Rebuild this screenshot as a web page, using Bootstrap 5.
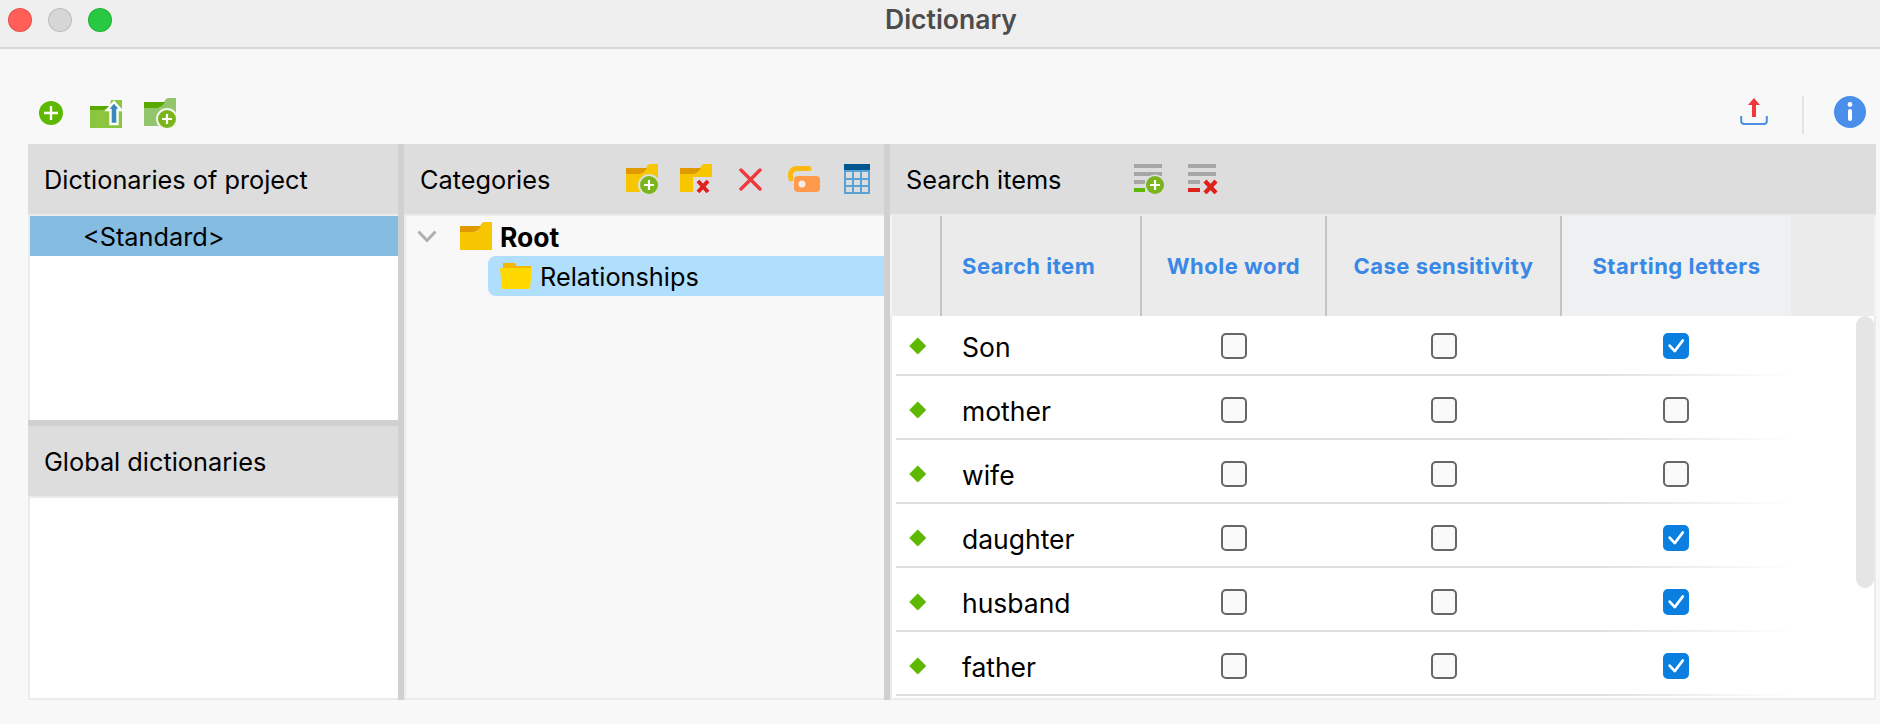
<!DOCTYPE html>
<html lang="en">
<head>
<meta charset="utf-8">
<title>Dictionary</title>
<link href="https://cdn.jsdelivr.net/npm/bootstrap@5.3.0/dist/css/bootstrap.min.css" rel="stylesheet">
<style>
html,body{height:724px;overflow:hidden}
body{background:#f8f8f8;color:#000;font-family:"Inter","Liberation Sans",sans-serif;font-size:25.3px;line-height:1.2}
svg{display:block;flex:none}
.wintitle{height:49px;background:#efefef;border-bottom:2px solid #d8d8d8;padding-left:22px}
.wintitle-text{font-size:26.5px;font-weight:600;color:#4c4c4c;line-height:38px}
.lights{left:8px;top:8px;gap:16px}
.light{width:24px;height:24px;border-radius:50%;border:1px solid rgba(0,0,0,.12)}
.l-red{background:#ff5f57}.l-gray{background:#d6d6d6}.l-green{background:#28c840}
.topbar{height:95px;padding:47px 14px 0 39px}
.dn5{margin-top:5px}.dn4{margin-top:4px}.dn2{margin-top:2px}
.tb-sep{width:2px;height:38px;background:#e4e4e4;margin:0 30px 0 34px}
.workspace{height:556px;margin:0 4px 0 28px}
.col-dict{width:370px}
.col-cat{width:480px}
.col-items{flex:1 1 0;min-width:0}
.split-v{width:6px;flex:none;background:#d0d0d0}
.split-h{height:6px;flex:none;background:#d0d0d0}
.pane-head{height:72px;flex:none;background:#ddd;border-bottom:2px solid #ebebeb;padding-left:16px}
.head-text{padding-top:2px}
.pane-body{border-left:2px solid #ebebeb;border-bottom:2px solid #ebebeb}
.bg-plain{background:#fff}
.bg-soft{background:#f8f8f8}
.dict-up{height:204px;border-bottom:0}
.dict-low{flex:1 1 0}
.dict-sel{height:40px;background:#85bce1;padding-left:53px;line-height:41px}
.tree-row{height:40px}
.tree-root{padding-left:11px}
.chev{margin-right:23px}
.tree-label{margin-left:8px;padding-top:2px}
.tree-strong{font-size:26.5px;padding-top:4px}
.tree-sel{margin-left:82px;background:#b0dffe;border-radius:8px 0 0 8px;padding-left:12px}
.g22{margin-left:22px}.g27{margin-left:27px}.g26{margin-left:26px}.g24{margin-left:24px}
.head-cat{padding-right:14px}
.ico-a{margin-left:73px}
.grid-cols{display:grid;grid-template-columns:49px 200px 185px 235px 230px 1fr}
.grid-head{display:grid;grid-template-columns:48px 200px 185px 235px 231px 1fr}
.thead-row{height:100px;background:#ebebeb;border-left:2px solid #f4f4f4;border-right:2px solid #f2f2f2}
.thead-cell{color:#3a88e6;font-size:22px;font-weight:700;letter-spacing:.5px;border-left:2px solid #c4c4c4}
.thead-none{border-left:0}
.thead-hi{background:#eef0f1}
.head-name{padding-left:20px}
.items-body{flex:1 1 0;background:#fff;border-right:2px solid #ebebeb}
.item-row{height:64px;padding-top:4px;font-size:26.5px;background:linear-gradient(to right,#e0e0e0 0,#e0e0e0 78%,rgba(224,224,224,0) 100%) 4px 100%/900px 2px no-repeat}
.item-row:first-child{height:60px;padding-top:0}
.item-name{padding:3px 0 0 21px}
.dia-cell{padding-left:2px}
.dia{width:11.500px;height:11.500px;background:#5fb800;transform:rotate(45deg)}
.form-check-input.chk{width:26px;height:26px;margin:0;border:2px solid #666;border-radius:5px;background-color:#fafafa;opacity:1;float:none}
.form-check-input.chk:checked{background-color:#0a7fe0;border-color:#0a7fe0;background-size:100% 100%;background-image:url("data:image/svg+xml,%3csvg xmlns='http://www.w3.org/2000/svg' viewBox='0 0 26 26'%3e%3cpath fill='none' stroke='%23fff' stroke-width='3.200' stroke-linecap='round' stroke-linejoin='round' d='M5.500 12.500l6 6.500L21 6.500'/%3e%3c/svg%3e")}
.scroller{right:0;top:0;width:18px;height:272px;background:#e5e5e5;border-radius:9px}
</style>
</head>
<body class="m-0">
<div class="wintitle position-relative d-flex justify-content-center">
  <div class="lights position-absolute d-flex">
    <div class="light l-red"></div><div class="light l-gray"></div><div class="light l-green"></div>
  </div>
  <div class="wintitle-text">Dictionary</div>
</div>

<div class="topbar d-flex align-items-start">
  <svg class="dn5" width="24" height="24" viewBox="0 0 24 24"><circle cx="12" cy="12" r="12" fill="#5fb800"/><path d="M12 5v14M5 12h14" stroke="#fff" stroke-width="2.4"/></svg>
  <svg class="g27 dn4" width="32" height="28" viewBox="0 0 32 28"><path d="M0 10H14Q18 10 20 6L21 0H32V28H0z" fill="#8cc63f"/><path d="M0 6H20Q17 10 13 10H0z" fill="#5aa900"/><path d="M24 2L31 10H27.500V24H20.500V10H17z" fill="#3c87ba" stroke="#fff" stroke-width="2.400"/></svg>
  <svg class="g22 dn2" width="32" height="30" viewBox="0 0 32 30"><path d="M0 10H14Q18 10 20 5Q21 0 25 0H32V28H0z" fill="#93c66c"/><path d="M0 4H21Q18 10 13 10H0z" fill="#59a800"/><circle cx="23" cy="21" r="11" fill="#f0f4e8"/><circle cx="23" cy="21" r="9" fill="#7ab51d"/><path d="M23 16v10M18 21h10" stroke="#fff" stroke-width="2.2"/></svg>
  <div class="ms-auto d-flex align-items-start">
    <svg class="dn2" width="28" height="28" viewBox="0 0 28 28"><path d="M14 0l6 7h-4v12h-4V7H8z" fill="#f0383f"/><path d="M1.200 18v5a3 3 0 0 0 3 3h19.600a3 3 0 0 0 3-3v-5" fill="none" stroke="#4a90e2" stroke-width="2"/></svg>
    <div class="tb-sep"></div>
    <svg width="32" height="32" viewBox="0 0 32 32"><circle cx="16" cy="16" r="16" fill="#4a90ea"/><circle cx="16" cy="8.500" r="2.400" fill="#fff"/><rect x="14" y="13" width="4" height="12" rx="2" fill="#fff"/></svg>
  </div>
</div>

<div class="workspace d-flex">
  <div class="col-dict d-flex flex-column">
    <div class="pane-head d-flex align-items-center"><span class="head-text">Dictionaries of project</span></div>
    <div class="pane-body bg-plain dict-up">
      <div class="dict-sel">&lt;Standard&gt;</div>
    </div>
    <div class="split-h"></div>
    <div class="pane-head d-flex align-items-center"><span class="head-text">Global dictionaries</span></div>
    <div class="pane-body bg-plain dict-low"></div>
  </div>
  <div class="split-v"></div>

  <div class="col-cat d-flex flex-column">
    <div class="pane-head head-cat d-flex align-items-center">
      <span class="me-auto head-text">Categories</span>
      <svg width="32" height="30" viewBox="0 0 32 30"><path d="M0 10H14Q18 10 20 5Q21 0 25 0H32V28H0z" fill="#f8c600"/><path d="M0 4H21Q18 10 13 10H0z" fill="#e09a00"/><circle cx="23" cy="21" r="11" fill="#dde2d2"/><circle cx="23" cy="21" r="9" fill="#7ab51d"/><path d="M23 16v10M18 21h10" stroke="#fff" stroke-width="2.2"/></svg>
      <svg class="g22" width="32" height="30" viewBox="0 0 32 30"><path d="M0 10H14Q18 10 20 5Q21 0 25 0H32V28H0z" fill="#f8c600"/><path d="M0 4H21Q18 10 13 10H0z" fill="#e09a00"/><rect x="13" y="13" width="19" height="17" fill="#ddd"/><path d="M18 17l10 11M28 17L18 28" stroke="#e0201b" stroke-width="4"/></svg>
      <svg class="g27" width="23" height="23" viewBox="0 0 23 23"><path d="M2 2l19 19M21 2L2 21" stroke="#f0383f" stroke-width="3.400" stroke-linecap="round"/></svg>
      <svg class="g26" width="32" height="27" viewBox="0 0 32 27"><path d="M3 13C1 7 4 2.500 9 2.500H21" fill="none" stroke="#fdb913" stroke-width="5" stroke-linecap="round"/><rect x="5" y="9" width="28" height="19" rx="5" fill="#ddd"/><rect x="6" y="10" width="26" height="16" rx="4" fill="#ff9a4d"/><circle cx="14" cy="18" r="3.500" fill="#f3eee4"/></svg>
      <svg class="g24" width="26" height="30" viewBox="0 0 26 30"><rect width="26" height="30" fill="#5aa2d3"/><rect width="26" height="6" fill="#00568f"/><g fill="#ddd"><rect x="2" y="8" width="6" height="6"/><rect x="10" y="8" width="6" height="6"/><rect x="18" y="8" width="6" height="6"/><rect x="2" y="16" width="6" height="5"/><rect x="10" y="16" width="6" height="5"/><rect x="18" y="16" width="6" height="5"/><rect x="2" y="23" width="6" height="5"/><rect x="10" y="23" width="6" height="5"/><rect x="18" y="23" width="6" height="5"/></g></svg>
    </div>
    <div class="pane-body bg-soft flex-grow-1">
      <div class="tree-row tree-root d-flex align-items-center">
        <svg class="chev" width="20" height="12" viewBox="0 0 20 12"><path d="M1.500 1.500L10 10.500L18.500 1.500" fill="none" stroke="#b0b0b0" stroke-width="3"/></svg>
        <svg width="32" height="28" viewBox="0 0 32 28"><path d="M0 10H14Q18 10 20 5Q21 0 25 0H32V28H0z" fill="#f8c600"/><path d="M0 4H21Q18 10 13 10H0z" fill="#e09a00"/></svg>
        <span class="tree-label tree-strong fw-bold">Root</span>
      </div>
      <div class="tree-row tree-sel d-flex align-items-center">
        <svg width="32" height="26" viewBox="0 0 32 26"><path d="M3 0H15L16 3H31V8H3z" fill="#f4b800"/><path d="M0 5H32L30 26H2z" fill="#ffd800"/></svg>
        <span class="tree-label">Relationships</span>
      </div>
    </div>
  </div>
  <div class="split-v"></div>

  <div class="col-items d-flex flex-column">
    <div class="pane-head d-flex align-items-center">
      <span class="head-text">Search items</span>
      <svg class="ico-a" width="32" height="30" viewBox="0 0 32 30"><path d="M0 2h28M0 10h28M0 18h11" stroke="#a6a6a6" stroke-width="4"/><path d="M0 26h11" stroke="#5fb800" stroke-width="4"/><circle cx="21" cy="21" r="10.500" fill="#ddd"/><circle cx="21" cy="21" r="9" fill="#7ab51d"/><path d="M21 16v10M16 21h10" stroke="#fff" stroke-width="2.200"/></svg>
      <svg class="g22" width="32" height="30" viewBox="0 0 32 30"><path d="M0 2h28M0 10h28M0 18h12" stroke="#a6a6a6" stroke-width="4"/><path d="M0 26h12" stroke="#e0201b" stroke-width="4"/><path d="M17 17l11 12M28 17L17 29" stroke="#e0201b" stroke-width="4.200"/></svg>
    </div>
    <div class="thead-row grid-head">
      <div class="thead-cell thead-none"></div>
      <div class="thead-cell head-name d-flex align-items-center">Search item</div>
      <div class="thead-cell d-flex align-items-center justify-content-center">Whole word</div>
      <div class="thead-cell d-flex align-items-center justify-content-center">Case sensitivity</div>
      <div class="thead-cell thead-hi d-flex align-items-center justify-content-center">Starting letters</div>
      <div class="thead-cell thead-none"></div>
    </div>
    <div class="items-body pane-body position-relative">
      <div class="item-row grid-cols align-items-center">
        <div class="dia-cell d-flex justify-content-center"><div class="dia"></div></div><div class="item-name">Son</div>
        <div class="d-flex justify-content-center"><input class="form-check-input chk" type="checkbox"></div>
        <div class="d-flex justify-content-center"><input class="form-check-input chk" type="checkbox"></div>
        <div class="d-flex justify-content-center"><input class="form-check-input chk" type="checkbox" checked></div><div></div>
      </div>
      <div class="item-row grid-cols align-items-center">
        <div class="dia-cell d-flex justify-content-center"><div class="dia"></div></div><div class="item-name">mother</div>
        <div class="d-flex justify-content-center"><input class="form-check-input chk" type="checkbox"></div>
        <div class="d-flex justify-content-center"><input class="form-check-input chk" type="checkbox"></div>
        <div class="d-flex justify-content-center"><input class="form-check-input chk" type="checkbox"></div><div></div>
      </div>
      <div class="item-row grid-cols align-items-center">
        <div class="dia-cell d-flex justify-content-center"><div class="dia"></div></div><div class="item-name">wife</div>
        <div class="d-flex justify-content-center"><input class="form-check-input chk" type="checkbox"></div>
        <div class="d-flex justify-content-center"><input class="form-check-input chk" type="checkbox"></div>
        <div class="d-flex justify-content-center"><input class="form-check-input chk" type="checkbox"></div><div></div>
      </div>
      <div class="item-row grid-cols align-items-center">
        <div class="dia-cell d-flex justify-content-center"><div class="dia"></div></div><div class="item-name">daughter</div>
        <div class="d-flex justify-content-center"><input class="form-check-input chk" type="checkbox"></div>
        <div class="d-flex justify-content-center"><input class="form-check-input chk" type="checkbox"></div>
        <div class="d-flex justify-content-center"><input class="form-check-input chk" type="checkbox" checked></div><div></div>
      </div>
      <div class="item-row grid-cols align-items-center">
        <div class="dia-cell d-flex justify-content-center"><div class="dia"></div></div><div class="item-name">husband</div>
        <div class="d-flex justify-content-center"><input class="form-check-input chk" type="checkbox"></div>
        <div class="d-flex justify-content-center"><input class="form-check-input chk" type="checkbox"></div>
        <div class="d-flex justify-content-center"><input class="form-check-input chk" type="checkbox" checked></div><div></div>
      </div>
      <div class="item-row grid-cols align-items-center">
        <div class="dia-cell d-flex justify-content-center"><div class="dia"></div></div><div class="item-name">father</div>
        <div class="d-flex justify-content-center"><input class="form-check-input chk" type="checkbox"></div>
        <div class="d-flex justify-content-center"><input class="form-check-input chk" type="checkbox"></div>
        <div class="d-flex justify-content-center"><input class="form-check-input chk" type="checkbox" checked></div><div></div>
      </div>
      <div class="scroller position-absolute"></div>
    </div>
  </div>
</div>
<script src="https://cdn.jsdelivr.net/npm/bootstrap@5.3.0/dist/js/bootstrap.bundle.min.js"></script>
</body>
</html>
